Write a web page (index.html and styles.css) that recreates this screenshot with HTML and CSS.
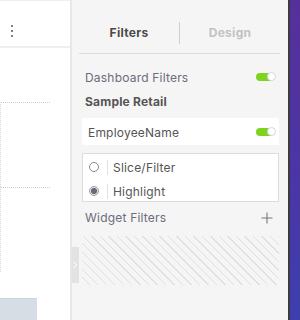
FILE: index.html
```html
<!DOCTYPE html>
<html>
<head>
<meta charset="utf-8">
<link rel="stylesheet" href="styles.css">
</head>
<body>
<div class="app">
  <div class="left">
    <div class="left-head">
      <span class="kebab"><i></i><i></i><i></i></span>
    </div>
    <div class="canvas">
      <div class="widget"></div>
      <div class="widget"></div>
      <div class="block"></div>
    </div>
  </div>
  <div class="right">
    <div class="collapse">
      <svg width="6" height="8" viewBox="0 0 6 8"><path d="M1.5 1 L4.5 4 L1.5 7" fill="none" stroke="#f4f4f4" stroke-width="1.2"/></svg>
    </div>
    <div class="tabs">
      <div class="tab active">Filters</div>
      <div class="tab-sep"></div>
      <div class="tab">Design</div>
    </div>
    <div class="row dash">
      <span>Dashboard Filters</span>
      <span class="toggle"><span class="knob"></span></span>
    </div>
    <div class="row source">Sample Retail</div>
    <div class="field">
      <span>EmployeeName</span>
      <span class="toggle"><span class="knob"></span></span>
    </div>
    <div class="radios">
      <div class="radio-row">
        <span class="radio"></span>
        <span class="rsep"></span>
        <span>Slice/Filter</span>
      </div>
      <div class="radio-row">
        <span class="radio checked"></span>
        <span class="rsep"></span>
        <span>Highlight</span>
      </div>
    </div>
    <div class="row widget-filters">
      <span>Widget Filters</span>
      <svg class="plus" width="12" height="12" viewBox="0 0 12 12"><path d="M6 0.5 V11.5 M0.5 6 H11.5" stroke="#777" stroke-width="1.1" fill="none"/></svg>
    </div>
    <div class="hatch"></div>
  </div>
  <div class="edge"></div>
  <div class="desk"></div>
</div>
</body>
</html>
```

FILE: styles.css
```css
html, body {
  margin: 0;
  padding: 0;
}
body {
  width: 300px;
  height: 320px;
  overflow: hidden;
  font-family: "Inter", "Open Sans", sans-serif;
  font-size: 12px;
  color: #555;
}
.app {
  display: flex;
  height: 320px;
}
.left {
  width: 70px;
  flex: none;
  background: #fff;
  border-right: 2px solid #e8e8e8;
  display: flex;
  flex-direction: column;
}
.left-head {
  height: 52px;
  border-top: 1px solid #efefef;
  border-bottom: 2px solid #efefef;
  box-sizing: border-box;
  display: flex;
  align-items: center;
  padding-left: 11px;
  padding-top: 14px;
}
.kebab {
  display: flex;
  flex-direction: column;
  gap: 3px;
}
.kebab i {
  display: block;
  width: 2px;
  height: 2px;
  background: #555;
  border-radius: 1px;
}
.canvas {
  flex: 1;
  display: flex;
  flex-direction: column;
  padding-top: 54px;
}
.widget {
  width: 50px;
  height: 85px;
  border-top: 1px dotted #cfcfcf;
  border-left: 1px dotted #dadada;
  box-sizing: border-box;
  flex: none;
}
.block {
  width: 37px;
  height: 21px;
  margin-top: 26px;
  background: #d6dde5;
  border-top: 1px solid #cdd5de;
  flex: none;
}
.right {
  position: relative;
  width: 216px;
  flex: none;
  background: #f5f5f5;
  padding: 0 9px 0 10px;
  box-sizing: border-box;
  display: flex;
  flex-direction: column;
}
.collapse {
  position: absolute;
  left: -1px;
  top: 247px;
  width: 8px;
  height: 36px;
  background: #e3e3e3;
  display: flex;
  align-items: center;
  justify-content: center;
}
.tabs {
  height: 54px;
  margin: 0 -1px 0 -3px;
  border-bottom: 1px solid #dcdcdc;
  box-sizing: border-box;
  display: flex;
  align-items: center;
  padding-top: 12px;
}
.tab {
  flex: 1;
  text-align: center;
  font-weight: 700;
  font-size: 12px;
  color: #c2c2c2;
  letter-spacing: 0.3px;
}
.tab.active {
  color: #4a4a4a;
}
.tab-sep {
  width: 1px;
  height: 22px;
  background: #cfcfcf;
}
.row {
  display: flex;
  align-items: center;
  justify-content: space-between;
  padding: 0 3px;
}
.dash {
  height: 24px;
  margin-top: 11px;
  color: #6c6c7c;
  letter-spacing: 0.2px;
}
.source {
  height: 22px;
  margin-top: 1px;
  font-weight: 700;
  color: #555;
  letter-spacing: 0.2px;
}
.toggle {
  position: relative;
  width: 20px;
  height: 9px;
  flex: none;
}
.toggle::before {
  content: "";
  position: absolute;
  left: 0;
  top: 0.5px;
  width: 18px;
  height: 8px;
  border-radius: 4px;
  background: #7ed321;
}
.knob {
  position: absolute;
  right: 0;
  top: -0.5px;
  width: 9px;
  height: 9px;
  border-radius: 50%;
  background: #fff;
  border: 1px solid #d8d8d8;
  box-sizing: border-box;
}
.field {
  margin-top: 6px;
  height: 27px;
  background: #fff;
  display: flex;
  align-items: center;
  justify-content: space-between;
  padding: 1px 3px 0 6px;
  box-sizing: border-box;
  color: #555;
  letter-spacing: 0.2px;
}
.radios {
  margin-top: 8px;
  height: 49px;
  background: #fff;
  border: 1px solid #dcdcdc;
  box-sizing: border-box;
  display: flex;
  flex-direction: column;
  padding-top: 1px;
}
.radio-row {
  height: 24px;
  flex: none;
  display: flex;
  align-items: center;
  padding-left: 6px;
  color: #555;
  letter-spacing: 0.2px;
}
.radio {
  width: 10px;
  height: 10px;
  border-radius: 50%;
  border: 1px solid #888;
  box-sizing: border-box;
  background: #fff;
  flex: none;
}
.radio.checked {
  background: radial-gradient(circle, #6a6a75 0 2.8px, #e6e6ec 3.2px);
  border-color: #9a9aa2;
}
.rsep {
  width: 1px;
  height: 15px;
  background: #e2e2e2;
  margin: 0 5px 0 8px;
  flex: none;
}
.widget-filters {
  margin-top: 5px;
  height: 20px;
  color: #6c6c7c;
  letter-spacing: 0.2px;
}
.plus {
  margin-right: 3px;
  margin-top: 1px;
}
.hatch {
  margin-top: 9px;
  height: 49px;
  background: repeating-linear-gradient(45deg, transparent 0 5px, #e0e0e0 5px 6px);
}
.edge {
  width: 2px;
  flex: none;
  background: #3c3c3c;
}
.desk {
  flex: 1;
  background: linear-gradient(180deg, #55309a 0%, #4a36a6 60%, #3d3fae 100%);
}
```
